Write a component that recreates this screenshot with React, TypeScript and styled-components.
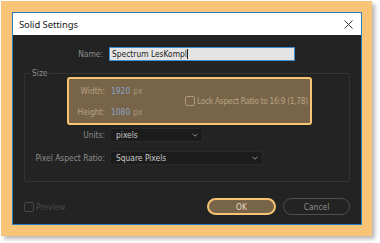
import React from "react";
import styled, { createGlobalStyle } from "styled-components";

const Global = createGlobalStyle`
  html, body { margin: 0; padding: 0; background: #ffffff; }
  body { width: 380px; height: 243px; overflow: hidden; }
`;

const UI = `"Liberation Sans Narrow", "DejaVu Sans Condensed", "Liberation Sans", sans-serif`;

const Frame = styled.div`
  box-sizing: border-box;
  margin: 1px 0 0 1px;
  width: 371px;
  height: 235px;
  background: #f8c477;
  box-shadow: 3px 3px 4px rgba(0, 0, 0, 0.28);
  padding: 11px 0 0 11px;
`;

const Dialog = styled.div`
  box-sizing: border-box;
  width: 350px;
  height: 213px;
  border: 1px solid #2a7fc0;
  background: #232323;
  display: flex;
  flex-direction: column;
  font-family: ${UI};
  font-size: 8.4px;
`;

const TitleBar = styled.div`
  height: 22px;
  background: #ffffff;
  display: flex;
  align-items: center;
  justify-content: space-between;
  padding: 0 8px 0 6px;
`;

const Title = styled.span`
  font-family: "Noto Sans", "Open Sans", sans-serif;
  font-size: 9.5px;
  color: #1a1a1a;
  letter-spacing: -0.1px;
`;

const Body = styled.div`
  flex: 1;
  display: flex;
  flex-direction: column;
  padding: 12px 11px 9px 11px;
`;

const Row = styled.div<{ $label: number; $gap?: number; $h?: number }>`
  display: grid;
  grid-template-columns: ${(p) => p.$label}px auto;
  column-gap: ${(p) => p.$gap ?? 6}px;
  align-items: center;
  height: ${(p) => p.$h ?? 14}px;
`;

const Label = styled.span<{ $tone?: "plain" | "warm" }>`
  text-align: right;
  color: ${(p) => (p.$tone === "warm" ? "#b7a283" : "#8d8d8d")};
  white-space: nowrap;
`;

const NameInput = styled.div`
  box-sizing: border-box;
  width: 186px;
  height: 14px;
  background: #e4e4e4;
  border: 1px solid #3d8fd2;
  display: flex;
  align-items: center;
  padding-left: 2px;
  color: #222;
`;

const Caret = styled.span`
  display: inline-block;
  width: 1px;
  height: 10px;
  background: #222;
  margin-left: 0.5px;
`;

const Group = styled.div`
  position: relative;
  box-sizing: border-box;
  margin-top: 12px;
  border: 1px solid #343434;
  border-radius: 2px;
  padding: 3px 0 16px 0;
  display: flex;
  flex-direction: column;
`;

const Legend = styled.span`
  position: absolute;
  left: 5px;
  top: -6px;
  padding: 0 2px;
  background: #232323;
  color: #8d8d8d;
  line-height: 11px;
`;

const Highlight = styled.div`
  box-sizing: border-box;
  margin-left: 42px;
  width: 245px;
  height: 48px;
  border: 2px solid #f7c372;
  border-radius: 3px;
  background: #786549;
  display: flex;
  align-items: center;
`;

const DimCol = styled.div`
  flex: none;
  width: 116px;
  display: flex;
  flex-direction: column;
  gap: 7px;
`;

const Value = styled.span`
  color: #86a2c6;
  & > em {
    font-style: normal;
    color: #a8977a;
    margin-left: 3px;
  }
`;

const CheckLabel = styled.label<{ $dim?: boolean; $tight?: boolean }>`
  display: flex;
  align-items: center;
  gap: 2px;
  color: ${(p) => (p.$dim ? "#4a4a4a" : "#b7a283")};
  letter-spacing: ${(p) => (p.$tight ? "-0.32px" : "0")};
  white-space: nowrap;
`;

const Box = styled.span<{ $dim?: boolean }>`
  box-sizing: border-box;
  flex: none;
  width: 10px;
  height: 10px;
  border: 1px solid ${(p) => (p.$dim ? "#464646" : "#b09c7c")};
  border-radius: 2px;
`;

const Select = styled.div<{ $w: number }>`
  box-sizing: border-box;
  width: ${(p) => p.$w}px;
  height: 14px;
  background: #1c1c1c;
  border: 1px solid #2a2a2a;
  border-radius: 2px;
  display: flex;
  align-items: center;
  justify-content: space-between;
  padding: 0 4px 0 5px;
  color: #c9c9c9;
`;

const Footer = styled.div`
  margin-top: 16px;
  display: flex;
  align-items: center;
  justify-content: space-between;
`;

const Buttons = styled.div`
  display: flex;
  gap: 7px;
`;

const Pill = styled.button<{ $primary?: boolean }>`
  box-sizing: border-box;
  height: 17px;
  width: ${(p) => (p.$primary ? 69 : 67)}px;
  border-radius: 9px;
  font-family: ${UI};
  font-size: 8.4px;
  padding: 0;
  border: ${(p) => (p.$primary ? "2px solid #f7c372" : "1px solid #505050")};
  background: ${(p) => (p.$primary ? "#786549" : "transparent")};
  color: ${(p) => (p.$primary ? "#e6d7bd" : "#8f8f8f")};
`;

const Chevron = () => (
  <svg width="6" height="4" viewBox="0 0 6 4">
    <path d="M0.5 0.8 L3 3.2 L5.5 0.8" fill="none" stroke="#9a9a9a" strokeWidth="0.9" />
  </svg>
);

const Close = () => (
  <svg width="9" height="9" viewBox="0 0 9 9">
    <path d="M0.5 0.5 L8.5 8.5 M8.5 0.5 L0.5 8.5" stroke="#333" strokeWidth="1" />
  </svg>
);

export default function App() {
  return (
    <>
      <Global />
      <Frame>
        <Dialog>
          <TitleBar>
            <Title>Solid Settings</Title>
            <Close />
          </TitleBar>
          <Body>
            <Row $label={79}>
              <Label>Name:</Label>
              <NameInput>
                Spectrum LesKompl
                <Caret />
              </NameInput>
            </Row>
            <Group>
              <Legend>Size</Legend>
              <Highlight>
                <DimCol>
                  <Row $label={36}>
                    <Label $tone="warm">Width:</Label>
                    <Value>
                      1920<em>px</em>
                    </Value>
                  </Row>
                  <Row $label={36}>
                    <Label $tone="warm">Height:</Label>
                    <Value>
                      1080<em>px</em>
                    </Value>
                  </Row>
                </DimCol>
                <CheckLabel $tight>
                  <Box />
                  Lock Aspect Ratio to 16:9 (1,78)
                </CheckLabel>
              </Highlight>
              <Row $label={80} $gap={5} style={{ marginTop: 3 }}>
                <Label>Units:</Label>
                <Select $w={93}>
                  pixels
                  <Chevron />
                </Select>
              </Row>
              <Row $label={80} $gap={5} style={{ marginTop: 9 }}>
                <Label>Pixel Aspect Ratio:</Label>
                <Select $w={153}>
                  Square Pixels
                  <Chevron />
                </Select>
              </Row>
            </Group>
            <Footer>
              <CheckLabel $dim>
                <Box $dim />
                Preview
              </CheckLabel>
              <Buttons>
                <Pill $primary>OK</Pill>
                <Pill>Cancel</Pill>
              </Buttons>
            </Footer>
          </Body>
        </Dialog>
      </Frame>
    </>
  );
}
